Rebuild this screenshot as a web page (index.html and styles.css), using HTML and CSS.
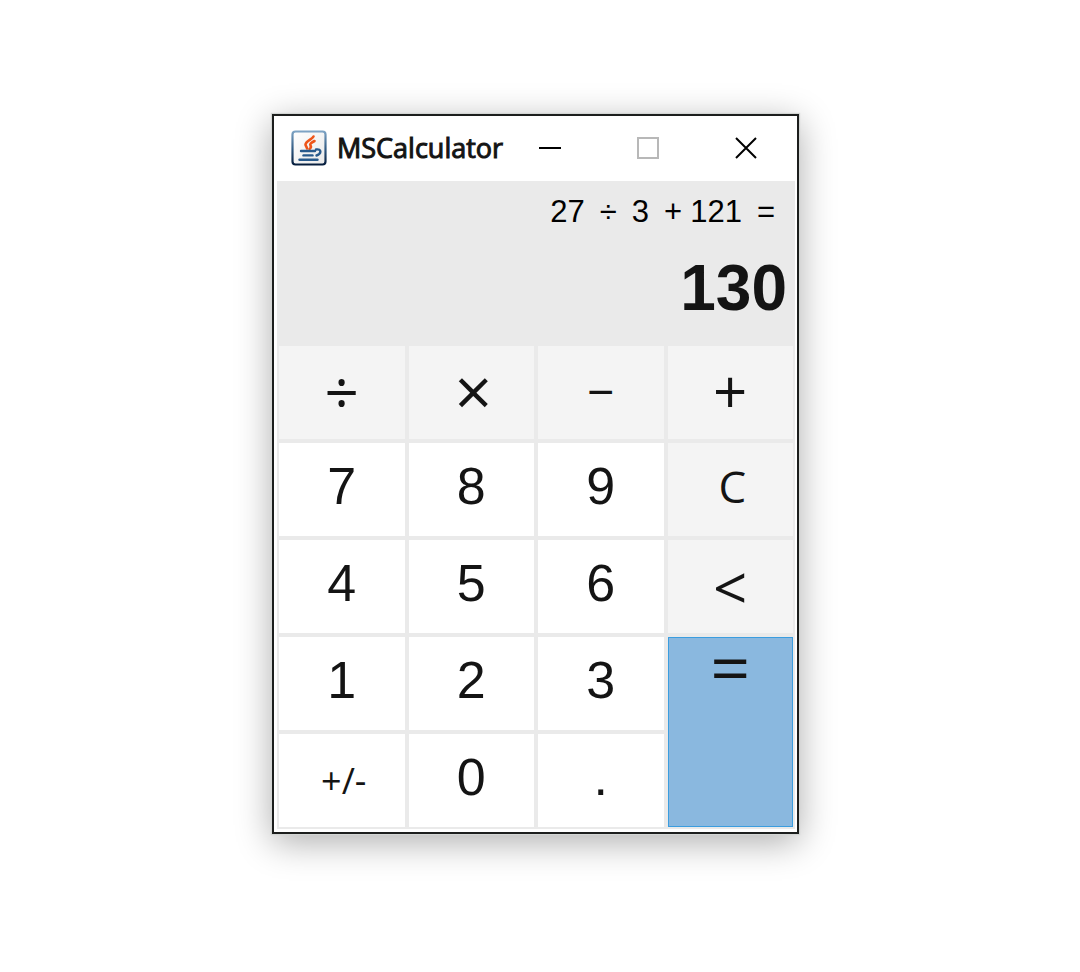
FILE: index.html
```html
<!DOCTYPE html>
<html lang="en">
<head>
<meta charset="utf-8">
<meta name="viewport" content="width=device-width, initial-scale=1">
<title>MSCalculator</title>
<link rel="stylesheet" href="styles.css">
</head>
<body>
<main class="window">
  <header class="titlebar">
    <svg class="logo" viewBox="0 0 36 36" aria-hidden="true">
      <defs>
        <linearGradient id="frame" x1="0" y1="0" x2="0" y2="1"><stop offset="0" stop-color="#7da3c4"/><stop offset=".55" stop-color="#2f5880"/><stop offset="1" stop-color="#061d3d"/></linearGradient>
        <linearGradient id="paper" x1="0" y1="0" x2="1" y2="1"><stop offset="0" stop-color="#fff"/><stop offset="1" stop-color="#e9e9e9"/></linearGradient>
      </defs>
      <rect x="1.5" y="1.5" width="33" height="33" rx="3" fill="url(#paper)" stroke="url(#frame)" stroke-width="2.2"/>
      <g fill="none" stroke="#ee5519" stroke-width="2.6" stroke-linecap="round">
        <path d="M22.5 6.5C21 9.500 15 11 14.500 14.500C14.500 16 16 17 16 18.500"/>
        <path d="M23.500 11C20 13 18.500 14 19.500 15.500C20.300 16.800 20 18 18.500 19"/>
      </g>
      <g fill="none" stroke="#285a8c" stroke-width="2.4" stroke-linecap="round">
        <path d="M10 21H24"/>
        <path d="M12.500 25.400H21.500"/>
        <path d="M25 19.500C31 18.500 30.500 24 25.500 25.500"/>
        <path d="M8.500 29.800H26.500"/>
      </g>
    </svg>
    <h1 class="title">MSCalculator</h1>
    <div class="controls">
      <button class="control" type="button" aria-label="Minimize"><svg viewBox="0 0 24 24"><path d="M1 12h22" stroke="#000" stroke-width="2"/></svg></button>
      <button class="control" type="button" aria-label="Maximize" disabled><svg viewBox="0 0 24 24"><rect x="2" y="2" width="20" height="20" fill="none" stroke="#b8b8b8" stroke-width="2"/></svg></button>
      <button class="control" type="button" aria-label="Close"><svg viewBox="0 0 24 24"><path d="M2 2l20 20M22 2L2 22" stroke="#000" stroke-width="2"/></svg></button>
    </div>
  </header>
  <div class="body">
    <section class="display">
      <div class="expression"><span>27</span><span>÷</span><span>3</span><span class="sum"><span>+</span><span>121</span></span><span>=</span></div>
      <output class="result">130</output>
    </section>
    <section class="keys">
      <button class="key op" type="button">÷</button>
      <button class="key op times" type="button">×</button>
      <button class="key op minus" type="button">−</button>
      <button class="key op" type="button">+</button>
      <button class="key" type="button">7</button>
      <button class="key" type="button">8</button>
      <button class="key" type="button">9</button>
      <button class="key op clear" type="button">C</button>
      <button class="key" type="button">4</button>
      <button class="key" type="button">5</button>
      <button class="key" type="button">6</button>
      <button class="key op less" type="button">&lt;</button>
      <button class="key" type="button">1</button>
      <button class="key" type="button">2</button>
      <button class="key" type="button">3</button>
      <button class="key equals" type="button">=</button>
      <button class="key sign" type="button">+/-</button>
      <button class="key" type="button">0</button>
      <button class="key" type="button">.</button>
    </section>
  </div>
</main>
</body>
</html>
```

FILE: styles.css
```css
* { box-sizing: border-box; }
body {
  margin: 0;
  padding: 114px 9px 114px 0;
  background: #fff;
  color: #141414;
  font-family: "Liberation Sans", Arial, sans-serif;
}
.window {
  width: 100%;
  max-width: 527px;
  margin: 0 auto;
  border: 2px solid #1c1e1d;
  background: #fff;
  box-shadow: 0 0 1px 1px #d3d6d4, 0 8px 34px rgba(0, 0, 0, .33);
}
.titlebar {
  display: flex;
  align-items: center;
  height: 65px;
  padding: 0 4px 2px 17px;
}
.logo { width: 36px; height: 36px; flex: none; }
.title {
  margin: 0 0 0 10px;
  font: 400 27px/36px "Open Sans", sans-serif;
  -webkit-text-stroke: 1px #141414;
}
.controls { display: flex; gap: 4px; margin-left: auto; }
.control {
  display: grid;
  place-items: center;
  width: 94px;
  height: 48px;
  padding: 0;
  border: 0;
  background: none;
}
.control svg { width: 24px; height: 24px; }
.body {
  margin: 0 2px 3px 3px;
  padding: 0 2px 2px;
  background: #eaeaea;
}
.display {
  height: 165px;
  padding: 11px 6px 0 0;
  text-align: right;
}
.expression {
  display: flex;
  justify-content: flex-end;
  gap: 15px;
  padding-right: 12px;
  color: #000;
  font-size: 31px;
  line-height: 40px;
}
.sum { display: flex; gap: 8px; }
.result {
  display: block;
  margin-top: 18px;
  font-size: 64px;
  font-weight: 700;
  line-height: 76px;
}
.keys {
  display: grid;
  grid-template-columns: repeat(4, 1fr);
  grid-auto-rows: 93px;
  gap: 4px;
}
.key {
  padding: 0 0 7px;
  border: 0;
  background: #fff;
  color: #141414;
  font: 52px/60px "Liberation Sans", Arial, sans-serif;
}
.op, .sign, .equals {
  padding: 0;
  font-family: "Open Sans", sans-serif;
}
.op { padding-bottom: 4px; background: #f4f4f4; font-size: 60px; }
.times { padding: 0 0 6px 4px; font-size: 66px; }
.less { padding-bottom: 0; }
.minus { font-size: 48px; }
.clear { padding: 0 0 8px 4px; font-size: 44px; }
.sign { padding-left: 4px; font-size: 36px; }
.equals {
  grid-row: span 2;
  display: flex;
  justify-content: center;
  align-items: flex-start;
  border: 1px solid #3b9ddf;
  background: #8ab8df;
  font-size: 70px;
  line-height: 56px;
}
```
